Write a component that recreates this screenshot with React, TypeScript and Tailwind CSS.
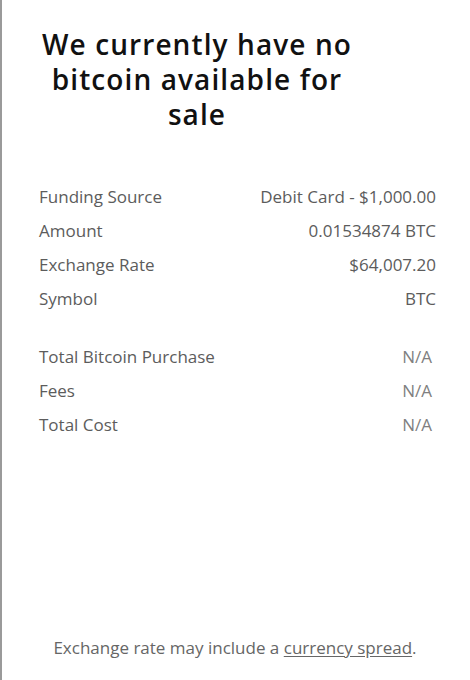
const details = [
  { label: "Funding Source", value: "Debit Card - $1,000.00" },
  { label: "Amount", value: "0.01534874 BTC" },
  { label: "Exchange Rate", value: "$64,007.20" },
  { label: "Symbol", value: "BTC" },
];

const totals = [
  { label: "Total Bitcoin Purchase", value: "N/A" },
  { label: "Fees", value: "N/A" },
  { label: "Total Cost", value: "N/A" },
];

function Row({ label, value, muted }: { label: string; value: string; muted?: boolean }) {
  return (
    <div className="flex items-center justify-between leading-[34px]">
      <span>{label}</span>
      <span className={muted ? "pr-[4px] text-[#808080]" : ""}>{value}</span>
    </div>
  );
}

export default function App() {
  return (
    <div
      className="flex h-[680px] w-[470px] flex-col border-l-2 border-l-[#9a9a9a] bg-white"
      style={{ fontFamily: '"Open Sans", "Liberation Sans", sans-serif' }}
    >
      {/* Heading */}
      <h1 className="w-[390px] pt-[27px] text-center text-[28px] font-semibold leading-[35px] tracking-[1.1px] text-[#111]">
        We currently have no
        <br />
        bitcoin available for
        <br />
        sale
      </h1>

      {/* Details */}
      <div className="mt-[48px] pl-[37px] pr-[34px] text-[17px] text-[#5c5c5c]">
        {details.map((d) => (
          <Row key={d.label} label={d.label} value={d.value} />
        ))}

        <div className="mt-[24px]">
          {totals.map((t) => (
            <Row key={t.label} label={t.label} value={t.value} muted />
          ))}
        </div>
      </div>

      {/* Footer */}
      <p className="mt-auto mb-[20px] pr-[2px] text-center text-[17px] text-[#666]">
        Exchange rate may include a{" "}
        <span className="underline underline-offset-2">currency spread</span>.
      </p>
    </div>
  );
}
